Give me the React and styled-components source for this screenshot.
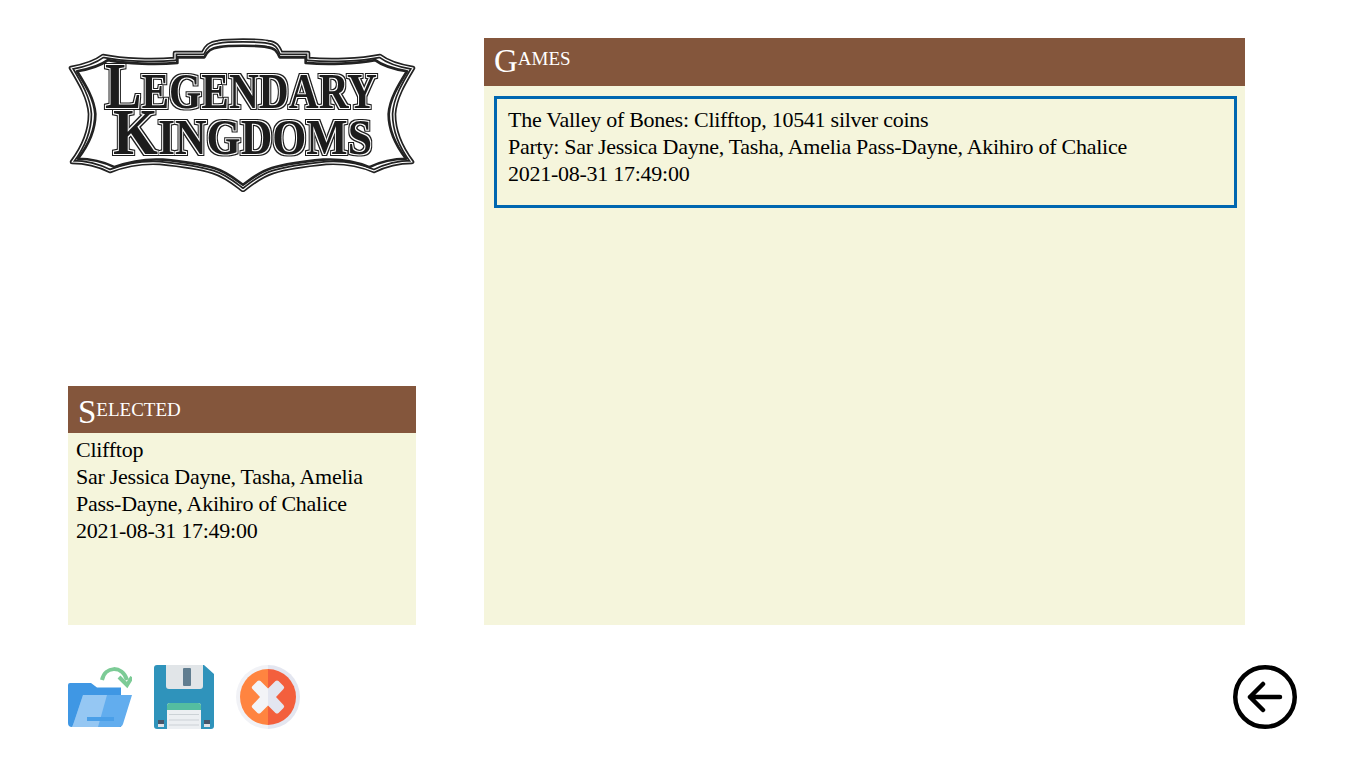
import React from 'react';
import styled, { createGlobalStyle } from 'styled-components';

const GlobalStyle = createGlobalStyle`
  html, body {
    margin: 0;
    padding: 0;
    background: #ffffff;
  }
  body {
    font-family: "Liberation Serif", "Times New Roman", serif;
    color: #000000;
  }
`;

const SHIELD = 'M3 30 C14 28 26 25 35 18 C55 22 85 23 107 21 V15 H135 C138 8 142 5 150 4 C160 2 190 2 200 4 C208 5 210 8 213 15 H240 V21 C262 23 292 22 312 18 C321 25 333 28 345 30 C336 45 327 60 326 76 C326 95 335 112 344 124 C330 124 318 127 306 133 C290 126 275 124 258 125 C238 127 218 130 205 134 C192 138 183 146 175 152 C167 146 158 138 145 134 C132 130 112 127 92 125 C75 124 60 126 42 133 C30 127 18 124 4 124 C13 112 22 95 22 76 C21 60 12 45 3 30 Z';

const Logo = () => (
  <LogoBox>
    <svg width="348" height="154" viewBox="0 0 348 154">
      <defs>
        <filter id="inlineRing" x="-5%" y="-20%" width="110%" height="140%">
          <feMorphology in="SourceAlpha" operator="dilate" radius="1.1" result="gap" />
          <feMorphology in="SourceAlpha" operator="dilate" radius="1.9" result="outer" />
          <feComposite in="outer" in2="gap" operator="out" result="ring" />
          <feFlood floodColor="#1d1d1d" />
          <feComposite in2="ring" operator="in" result="line" />
          <feMerge>
            <feMergeNode in="line" />
            <feMergeNode in="SourceGraphic" />
          </feMerge>
        </filter>
      </defs>
      <path d={SHIELD} fill="#ffffff" stroke="#222222" strokeWidth="4.6" strokeLinejoin="round" />
      <path d={SHIELD} fill="none" stroke="#ffffff" strokeWidth="1.2" strokeLinejoin="round" />
      <g transform="translate(174 77) scale(0.965 0.93) translate(-174 -77)">
        <path d={SHIELD} fill="none" stroke="#222222" strokeWidth="2.8" strokeLinejoin="round" />
      </g>
      <g filter="url(#inlineRing)">
        <LogoWord x="37" y="70" textLength="272" lengthAdjust="spacingAndGlyphs">
          <tspan fontSize="66">L</tspan>EGENDARY
        </LogoWord>
        <LogoWord x="45" y="116" textLength="259" lengthAdjust="spacingAndGlyphs">
          <tspan fontSize="66">K</tspan>INGDOMS
        </LogoWord>
      </g>
    </svg>
  </LogoBox>
);

const FolderIcon = () => (
  <svg width="64" height="64" viewBox="0 0 64 64">
    <path d="M0 20 Q0 18 2 18 H23 L29 22.5 H53 V62 H4 Q0 62 0 58 Z" fill="#3f97e4" />
    <path d="M15 30 H64 L55 59 Q54 62 51 62 H4 Q5 60 6 57 Z" fill="#62adee" />
    <path d="M15 30 H39 L30 62 H4 Q5 60 6 57 Z" fill="#95c7f3" />
    <rect x="19" y="52" width="27" height="4" fill="#4a9fe8" />
    <path d="M34 15 C37 1 54 0 59 15" fill="none" stroke="#7ccb96" strokeWidth="4" />
    <path d="M51 12 L59 20 L64 12" fill="none" stroke="#7ccb96" strokeWidth="4" />
  </svg>
);

const SaveIcon = () => (
  <svg width="60" height="64" viewBox="0 0 60 64">
    <path d="M3 0 H50 L60 9 V61 Q60 64 57 64 H3 Q0 64 0 61 V3 Q0 0 3 0 Z" fill="#2f93bb" />
    <path d="M12 0 H49 V21 Q49 24 46 24 H15 Q12 24 12 21 Z" fill="#e1e5e8" />
    <rect x="29" y="3" width="8" height="18" rx="1" fill="#607d90" />
    <path d="M13 41 Q13 38 16 38 H44 Q47 38 47 41 V64 H13 Z" fill="#eceff2" />
    <path d="M13 45 V41 Q13 38 16 38 H44 Q47 38 47 41 V45 Z" fill="#54bda0" />
    <path d="M15 49.5 H45 M15 55 H45 M15 60 H45" stroke="#ccd2d6" strokeWidth="1.2" />
    <rect x="4" y="55" width="6" height="7" fill="#47566a" />
    <rect x="50" y="55" width="6" height="7" fill="#47566a" />
    <rect x="4" y="59" width="6" height="3" fill="#dfe3e8" />
    <rect x="50" y="59" width="6" height="3" fill="#dfe3e8" />
  </svg>
);

const CancelIcon = () => (
  <svg width="64" height="64" viewBox="0 0 64 64">
    <path d="M32 0 A32 32 0 0 0 32 64 Z" fill="#f1f2f6" />
    <path d="M32 0 A32 32 0 0 1 32 64 Z" fill="#e4e6f0" />
    <path d="M32 4 A28 28 0 0 0 32 60 Z" fill="#ff8440" />
    <path d="M32 4 A28 28 0 0 1 32 60 Z" fill="#f35f3d" />
    <path d="M32 23.5 L24.5 16 Q23 15 21.5 16 L16.5 21 Q15 22.5 16.5 24 L24 32 L16.5 40 Q15 41.5 16.5 43 L21.5 48 Q23 49 24.5 48 L32 40.5 Z" fill="#f3f4f7" />
    <path d="M32 23.5 L39.5 16 Q41 15 42.5 16 L47.5 21 Q49 22.5 47.5 24 L40 32 L47.5 40 Q49 41.5 47.5 43 L42.5 48 Q41 49 39.5 48 L32 40.5 Z" fill="#e3e6f0" />
  </svg>
);

const BackIcon = () => (
  <svg width="64" height="64" viewBox="0 0 64 64">
    <circle cx="32" cy="32" r="29.75" fill="#ffffff" stroke="#000000" strokeWidth="4.5" />
    <path d="M47 32 H17 M30 19 L17 32 L30 45" fill="none" stroke="#000000" strokeWidth="4.5" strokeLinecap="round" strokeLinejoin="round" />
  </svg>
);

export default function App() {
  return (
    <Page>
      <GlobalStyle />
      <Content>
        <Sidebar>
          <Logo />
          <SelectedPanel>
            <PanelHeader $height={47} $top={10}>Selected</PanelHeader>
            <SelectedBody>
              <div>Clifftop</div>
              <div>Sar Jessica Dayne, Tasha, Amelia Pass-Dayne, Akihiro of Chalice</div>
              <div>2021-08-31 17:49:00</div>
            </SelectedBody>
          </SelectedPanel>
        </Sidebar>
        <GamesPanel>
          <PanelHeader $height={48} $top={7}>Games</PanelHeader>
          <GamesBody>
            <GameCard>
              <div>The Valley of Bones: Clifftop, 10541 silver coins</div>
              <div>Party: Sar Jessica Dayne, Tasha, Amelia Pass-Dayne, Akihiro of Chalice</div>
              <div>2021-08-31 17:49:00</div>
            </GameCard>
          </GamesBody>
        </GamesPanel>
      </Content>
      <Toolbar>
        <ToolGroup>
          <IconButton><FolderIcon /></IconButton>
          <IconButton><SaveIcon /></IconButton>
          <IconButton><CancelIcon /></IconButton>
        </ToolGroup>
        <IconButton><BackIcon /></IconButton>
      </Toolbar>
    </Page>
  );
}

const Page = styled.div`
  width: 1366px;
  height: 768px;
  box-sizing: border-box;
  padding: 38px 69px 0 68px;
  overflow: hidden;
  background: #ffffff;
`;

const Content = styled.div`
  display: flex;
  gap: 68px;
  height: 587px;
`;

const Sidebar = styled.div`
  width: 348px;
  display: flex;
  flex-direction: column;
  justify-content: space-between;
`;

const LogoBox = styled.div`
  width: 348px;
  height: 154px;
`;

const LogoWord = styled.text`
  font-family: "Liberation Serif", serif;
  font-weight: 700;
  font-size: 50px;
  fill: #1d1d1d;
`;

const SelectedPanel = styled.section`
  height: 239px;
  display: flex;
  flex-direction: column;
  background: #f5f5dc;
`;

const PanelHeader = styled.h2`
  margin: 0;
  height: ${(p) => p.$height}px;
  box-sizing: border-box;
  padding: ${(p) => p.$top}px 10px 0;
  background: #84563c;
  color: #ffffff;
  font-size: 19px;
  line-height: 28px;
  font-weight: 400;
  text-transform: uppercase;

  &::first-letter {
    font-size: 33px;
    vertical-align: -7px;
  }
`;

const SelectedBody = styled.div`
  padding: 3px 8px;
  font-size: 22px;
  line-height: 27px;
  letter-spacing: -0.26px;
`;

const GamesPanel = styled.section`
  width: 761px;
  display: flex;
  flex-direction: column;
  background: #f5f5dc;
`;

const GamesBody = styled.div`
  padding: 10px 8px 0 10px;
`;

const GameCard = styled.div`
  box-sizing: border-box;
  height: 112px;
  padding: 7px 11px 18px;
  border: 3px solid #0067b0;
  font-size: 22px;
  line-height: 27px;
  letter-spacing: -0.26px;
`;

const Toolbar = styled.div`
  display: flex;
  justify-content: space-between;
  align-items: flex-start;
  margin-top: 40px;
`;

const ToolGroup = styled.div`
  display: flex;
  gap: 22px;
`;

const IconButton = styled.div`
  display: flex;
  height: 64px;
`;
